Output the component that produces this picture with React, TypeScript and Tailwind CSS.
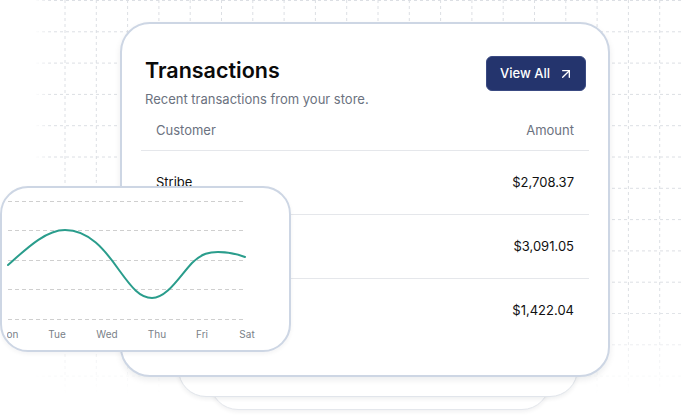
import { ArrowUpRight } from "lucide-react";

const rows = [
  { name: "Stribe", amount: "$2,708.37" },
  { name: "Lumen Co.", amount: "$3,091.05" },
  { name: "Harbor", amount: "$1,422.04" },
];

const days = [
  { label: "Mon", x: 1 },
  { label: "Tue", x: 50 },
  { label: "Wed", x: 100 },
  { label: "Thu", x: 150 },
  { label: "Fri", x: 195 },
  { label: "Sat", x: 240 },
];

const STEP = 31.3;

function GridBackdrop() {
  const verticals = Array.from({ length: 23 }, (_, i) => 2.4 + i * STEP);
  const horizontals = Array.from({ length: 14 }, (_, i) => 0.5 + i * STEP);
  return (
    <svg className="absolute inset-0" width="683" height="415">
      <defs>
        <linearGradient id="fadeX" x1="0" x2="1" y1="0" y2="0">
          <stop offset="0" stopColor="#000" />
          <stop offset="0.05" stopColor="#000" />
          <stop offset="0.075" stopColor="#fff" />
          <stop offset="1" stopColor="#fff" />
        </linearGradient>
        <linearGradient id="fadeY" x1="0" x2="0" y1="0" y2="1">
          <stop offset="0" stopColor="#fff" />
          <stop offset="0.72" stopColor="#fff" />
          <stop offset="0.95" stopColor="#000" />
        </linearGradient>
        <mask id="gridMask">
          <rect width="683" height="415" fill="url(#fadeX)" />
        </mask>
        <mask id="gridMaskY">
          <rect width="683" height="415" fill="url(#fadeY)" />
        </mask>
      </defs>
      <g mask="url(#gridMaskY)">
        <g mask="url(#gridMask)" stroke="#dcdfe4" strokeWidth="1" strokeDasharray="3 3">
          {verticals.map((x) => (
            <line key={`v${x}`} x1={x} x2={x} y1={0} y2={415} />
          ))}
          {horizontals.map((y) => (
            <line key={`h${y}`} x1={0} x2={683} y1={y} y2={y} />
          ))}
        </g>
      </g>
    </svg>
  );
}

function WeekChart() {
  const lines = [6, 35, 65, 94, 124];
  return (
    <svg width="250" height="148" className="ml-[5px] mt-[7px] block">
      {lines.map((y) => (
        <line
          key={y}
          x1={1}
          x2={238}
          y1={y + 0.5}
          y2={y + 0.5}
          stroke="#cfcfcf"
          strokeDasharray="4 3"
        />
      ))}
      <path
        d="M1 70 C 18 55, 38 35, 58 35 C 82 35, 98 55, 112 75 C 125 93, 133 103, 145 103 C 160 103, 172 82, 185 68 C 195 58, 203 57, 211 57 C 222 57, 230 59, 238 62"
        fill="none"
        stroke="#2a9d8c"
        strokeWidth="2"
        strokeLinecap="round"
      />
      {days.map((d) => (
        <text
          key={d.label}
          x={d.x}
          y={143}
          textAnchor="middle"
          fontSize="10"
          fill="#7a7f88"
          fontFamily="Inter, sans-serif"
        >
          {d.label}
        </text>
      ))}
    </svg>
  );
}

export default function App() {
  return (
    <div className="relative h-[415px] w-[683px] overflow-hidden bg-white pl-[120px] pt-[22px] font-['Inter',sans-serif]">
      <GridBackdrop />

      <div className="absolute left-[210px] top-[300px] h-[110px] w-[340px] rounded-[28px] border border-[#e4e7ec] bg-white shadow-[0_2px_4px_rgba(15,23,42,0.06)]" />
      <div className="absolute left-[178px] top-[290px] h-[107px] w-[400px] rounded-[28px] border border-[#e1e5eb] bg-white shadow-[0_2px_4px_rgba(15,23,42,0.07)]" />

      <div className="relative h-[355px] w-[490px] rounded-[30px] border-2 border-[#cdd6e4] bg-white shadow-[0_3px_6px_rgba(15,23,42,0.08)]">
        <div className="flex items-start justify-between pl-[23px] pr-[22px] pt-[32px]">
          <div>
            <h2 className="text-[21.5px] font-semibold leading-[28px] text-[#0a0a0a]">Transactions</h2>
            <p className="mt-[5px] text-[13px] leading-[20px] text-[#6b7280]">
              Recent transactions from your store.
            </p>
          </div>
          <button className="flex h-[35px] items-center gap-2 rounded-md border border-[#3a4a82] bg-[#24346d] pl-[13px] pr-[11px] text-[13px] font-medium text-white">
            View All
            <ArrowUpRight size={16} strokeWidth={2} />
          </button>
        </div>

        <div className="mx-[19px] mt-[2px]">
          <div className="flex h-10 items-center justify-between border-b border-[#e5e7eb] px-[15px] text-[13px] text-[#6b7280]">
            <span>Customer</span>
            <span>Amount</span>
          </div>
          {rows.map((r, i) => (
            <div
              key={r.name}
              className={`flex h-16 items-center justify-between px-[15px] text-[13px] text-[#111111] ${
                i < rows.length - 1 ? "border-b border-[#e5e7eb]" : ""
              }`}
            >
              <span>{r.name}</span>
              <span>{r.amount}</span>
            </div>
          ))}
        </div>
      </div>

      <div className="absolute left-0 top-[186px] h-[166px] w-[291px] overflow-hidden rounded-[28px] border-2 border-[#cdd6e4] bg-white shadow-[0_2px_4px_rgba(15,23,42,0.05)]">
        <WeekChart />
      </div>
    </div>
  );
}
